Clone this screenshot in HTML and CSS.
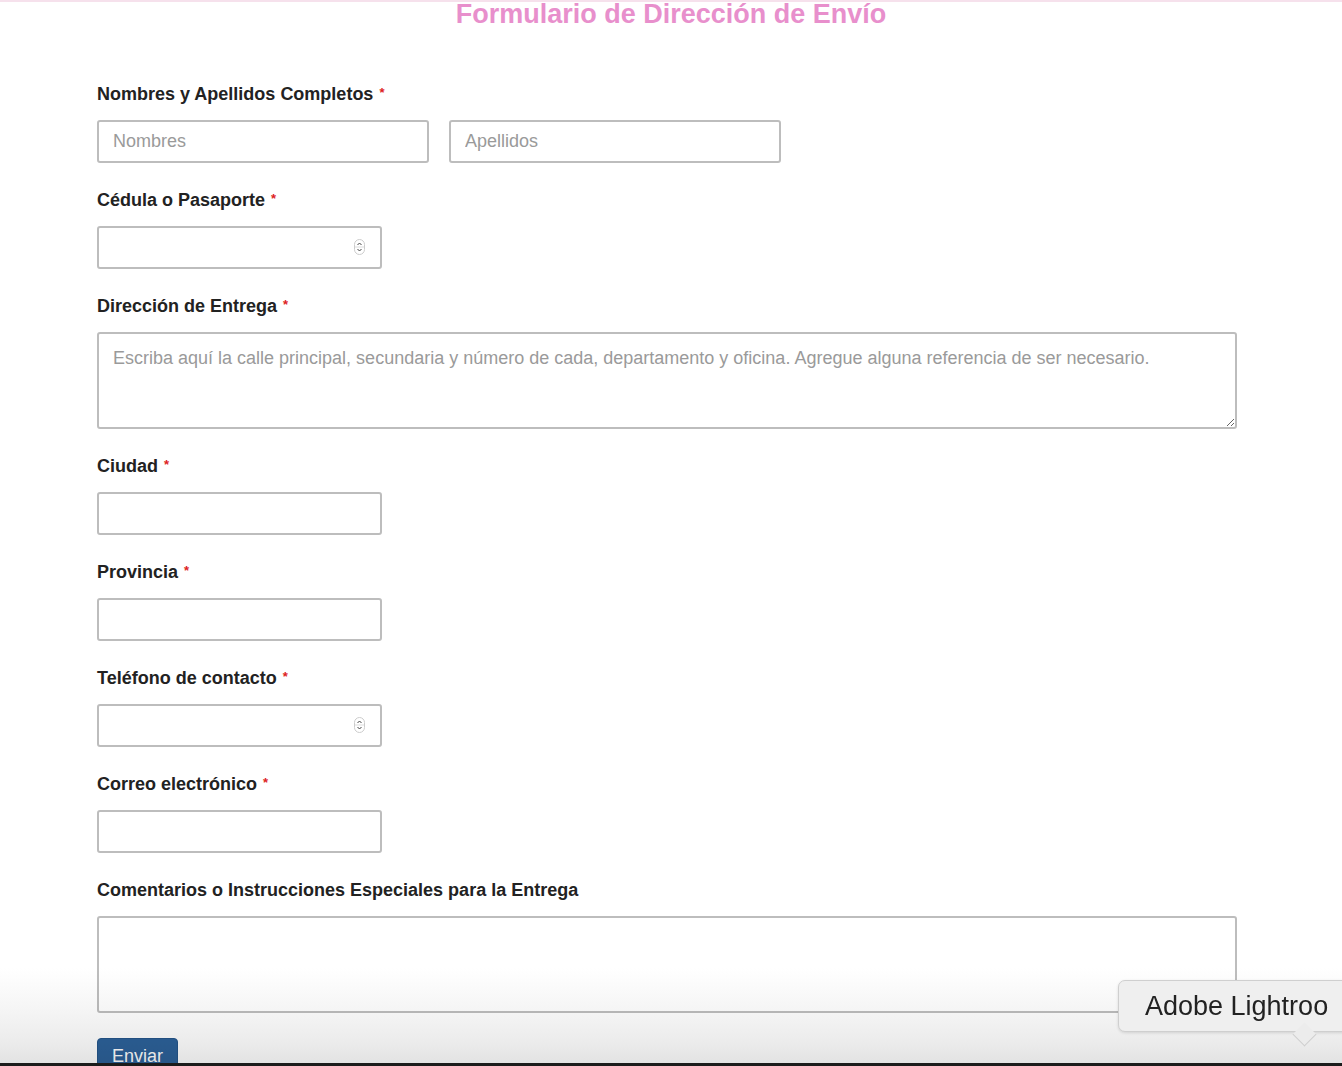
FILE: index.html
```html
<!DOCTYPE html>
<html lang="es">
<head>
<meta charset="utf-8">
<title>Formulario de Dirección de Envío</title>
<link rel="stylesheet" href="styles.css">
</head>
<body>
<div class="topline"></div>
<h1 class="title">Formulario de Dirección de Envío</h1>
<form class="form">
  <div class="group">
    <label class="label">Nombres y Apellidos Completos <span class="req">*</span></label>
    <div class="row">
      <input class="input half" type="text" placeholder="Nombres">
      <input class="input half" type="text" placeholder="Apellidos">
    </div>
  </div>
  <div class="group">
    <label class="label">Cédula o Pasaporte <span class="req">*</span></label>
    <div class="numwrap">
      <input class="input short" type="text">
      <svg class="spin" width="11" height="16" viewBox="0 0 11 16"><rect x="0.5" y="0.5" width="10" height="15" rx="5" fill="#fff" stroke="#ccc"/><line x1="1" y1="8" x2="10" y2="8" stroke="#ddd"/><path d="M3.5 6 L5.5 4 L7.5 6" fill="none" stroke="#444" stroke-width="1"/><path d="M3.5 10 L5.5 12 L7.5 10" fill="none" stroke="#444" stroke-width="1"/></svg>
    </div>
  </div>
  <div class="group">
    <label class="label">Dirección de Entrega <span class="req">*</span></label>
    <textarea class="input area" placeholder="Escriba aquí la calle principal, secundaria y número de cada, departamento y oficina. Agregue alguna referencia de ser necesario."></textarea>
  </div>
  <div class="group">
    <label class="label">Ciudad <span class="req">*</span></label>
    <input class="input short" type="text">
  </div>
  <div class="group">
    <label class="label">Provincia <span class="req">*</span></label>
    <input class="input short" type="text">
  </div>
  <div class="group">
    <label class="label">Teléfono de contacto <span class="req">*</span></label>
    <div class="numwrap">
      <input class="input short" type="text">
      <svg class="spin" width="11" height="16" viewBox="0 0 11 16"><rect x="0.5" y="0.5" width="10" height="15" rx="5" fill="#fff" stroke="#ccc"/><line x1="1" y1="8" x2="10" y2="8" stroke="#ddd"/><path d="M3.5 6 L5.5 4 L7.5 6" fill="none" stroke="#444" stroke-width="1"/><path d="M3.5 10 L5.5 12 L7.5 10" fill="none" stroke="#444" stroke-width="1"/></svg>
    </div>
  </div>
  <div class="group">
    <label class="label">Correo electrónico <span class="req">*</span></label>
    <input class="input short" type="text">
  </div>
  <div class="group">
    <label class="label">Comentarios o Instrucciones Especiales para la Entrega</label>
    <textarea class="input area"></textarea>
  </div>
  <button class="btn" type="button">Enviar</button>
</form>
<div class="dock-fade"></div>
<div class="dock-line"></div>
<div class="tooltip"><span class="arrow"></span><span class="tip-text">Adobe Lightroo</span></div>
</body>
</html>
```

FILE: styles.css
```css
html, body {
  margin: 0;
  padding: 0;
  background: #fff;
  font-family: "Liberation Sans", Arial, Helvetica, sans-serif;
  overflow: hidden;
  height: 1066px;
}
.topline {
  height: 2px;
  background: #f6e1ec;
}
.title {
  margin: -4px 0 0 0;
  font-size: 27px;
  line-height: 32px;
  font-weight: bold;
  color: #e88fcc;
  text-align: center;
}
.form {
  margin: 54px 0 0 97px;
  width: 1140px;
}
.group {
  margin-bottom: 27px;
}
.label {
  display: block;
  height: 20px;
  font-size: 18px;
  line-height: 20px;
  font-weight: bold;
  color: #222;
  margin-bottom: 16px;
  white-space: nowrap;
}
.req {
  position: relative;
  top: -3px;
  color: #d22;
  font-size: 13px;
  line-height: 1;
  margin-left: 1px;
}
.row {
  display: flex;
  gap: 20px;
}
.input {
  box-sizing: border-box;
  display: block;
  height: 43px;
  border: 2px solid #bdbdbd;
  border-radius: 3px;
  padding: 0 14px;
  font-family: "Liberation Sans", Arial, Helvetica, sans-serif;
  font-size: 18px;
  color: #333;
  background: #fff;
  outline: none;
  margin: 0;
}
.input::placeholder {
  color: #9a9a9a;
}
.half { width: 332px; }
.short { width: 285px; }
.area {
  width: 1140px;
  height: 97px;
  padding: 13px 14px;
  font-size: 18px;
  line-height: 22px;
  resize: both;
}
.numwrap {
  position: relative;
  width: 285px;
  height: 43px;
}
.spin {
  position: absolute;
  left: 257px;
  top: 13px;
}
.btn {
  display: block;
  box-sizing: border-box;
  margin: -2px 0 0 0;
  width: 81px;
  height: auto;
  background: #2c6199;
  border: 1px solid #24558a;
  border-radius: 4px;
  color: #fff;
  font-family: "Liberation Sans", Arial, Helvetica, sans-serif;
  font-size: 18px;
  padding: 6px 0 10px 0;
  line-height: 22px;
  text-align: center;
}
.dock-fade {
  position: fixed;
  left: 0;
  right: 0;
  bottom: 3px;
  height: 95px;
  background: linear-gradient(to bottom, #ffffff 0%, #f6f6f6 40%, #ebebeb 80%, #e3e3e3 100%);
  mix-blend-mode: multiply;
  pointer-events: none;
}
.dock-line {
  position: fixed;
  left: 0;
  right: 0;
  bottom: 0;
  height: 3px;
  background: #1c1c1c;
}
.tooltip {
  position: fixed;
  left: 1118px;
  top: 980px;
  width: 250px;
  height: 52px;
  box-sizing: border-box;
  background: #efefef;
  border: 1px solid #cfcfcf;
  border-radius: 7px;
  box-shadow: 0 1px 3px rgba(0,0,0,0.12);
  padding-left: 26px;
  font-family: "Liberation Sans", Arial, Helvetica, sans-serif;
  font-size: 27px;
  line-height: 51px;
  color: #222;
  white-space: nowrap;
}
.tip-text {
  position: relative;
}
.arrow {
  position: absolute;
  left: 177px;
  top: 45px;
  width: 16px;
  height: 16px;
  background: #ececec;
  border-right: 1px solid #cfcfcf;
  border-bottom: 1px solid #cfcfcf;
  transform: rotate(45deg);
}
```
